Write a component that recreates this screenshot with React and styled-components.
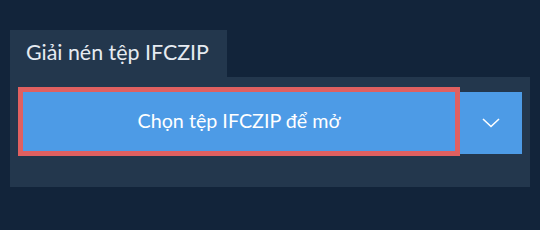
import React from "react";
import styled, { createGlobalStyle } from "styled-components";

const Global = createGlobalStyle`
  html, body {
    margin: 0;
    background: #12243a;
    font-family: Lato, "Noto Sans", sans-serif;
  }
`;

const Page = styled.div`
  padding: 30px 10px 0 10px;
  width: 520px;
`;

const Tab = styled.div`
  display: inline-block;
  width: 217px;
  height: 47px;
  box-sizing: border-box;
  padding: 9px 0 0 16px;
  background: #23374d;
  color: #e6ebf1;
  font-size: 21.4px;
  line-height: 26px;
  vertical-align: top;
`;

const Panel = styled.div`
  background: #23374d;
  padding: 15px 8px 33px 13px;
`;

const Row = styled.div`
  display: flex;
  align-items: flex-start;
  gap: 5px;
`;

const MainButton = styled.button`
  flex: 1;
  height: 59px;
  border: none;
  background: #4d9be6;
  color: #ffffff;
  font-family: Lato, "Noto Sans", sans-serif;
  font-size: 19.7px;
  padding: 0 0 2px 0;
  outline: 5px solid #e06060;
  cursor: pointer;
`;

const DropButton = styled.button`
  width: 62px;
  height: 62px;
  border: none;
  background: #4d9be6;
  display: flex;
  align-items: center;
  justify-content: center;
  padding: 0;
  cursor: pointer;
`;

const Chevron = () => (
  <svg width="18" height="10" viewBox="0 0 18 10">
    <path d="M1 1 L9 8.5 L17 1" fill="none" stroke="#fff" strokeWidth="1.6" />
  </svg>
);

export default function App() {
  return (
    <>
      <Global />
      <Page>
        <Tab>Giải nén tệp IFCZIP</Tab>
        <Panel>
          <Row>
            <MainButton>Chọn tệp IFCZIP để mở</MainButton>
            <DropButton>
              <Chevron />
            </DropButton>
          </Row>
        </Panel>
      </Page>
    </>
  );
}
